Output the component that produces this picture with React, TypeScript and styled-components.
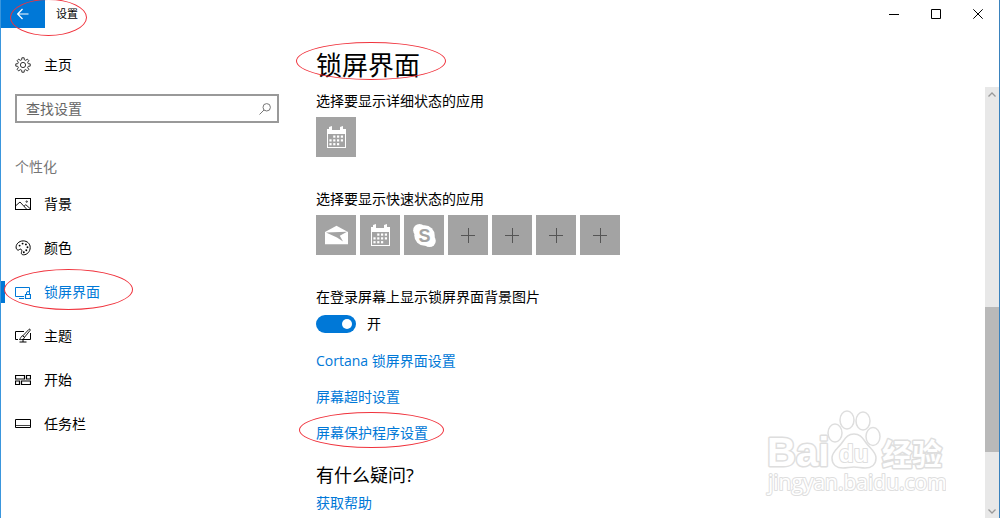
import React from "react";
import styled, { createGlobalStyle } from "styled-components";

const BLUE = "#0078d7";

const GlobalStyle = createGlobalStyle`
  * { box-sizing: border-box; }
  body { margin: 0; background: #fff; }
  body, button, input {
    font-family: "Open Sans", "Noto Sans CJK SC", sans-serif;
    font-size: 14px;
    color: #000;
  }
`;

const Window = styled.div`
  position: relative;
  display: flex;
  flex-direction: column;
  height: 100vh;
  overflow: hidden;
  border-left: 1px solid #3a96dd;
  border-right: 1px solid #3a82bd;
  line-height: 20px;
`;

const TitleBar = styled.header`
  position: relative;
  display: flex;
  height: 28px;
  flex: none;
`;

const BackButton = styled.button`
  display: flex;
  align-items: center;
  justify-content: center;
  width: 44px;
  padding: 0;
  border: 0;
  background: ${BLUE};
`;

const WindowTitle = styled.span`
  flex: 1;
  padding-left: 11px;
  font-size: 11px;
  line-height: 28px;
`;

const CaptionButton = styled.button`
  display: flex;
  align-items: center;
  justify-content: center;
  width: 42px;
  padding: 0;
  border: 0;
  background: none;
`;

const Body = styled.div`
  display: flex;
  flex: 1;
  min-height: 0;
`;

const Sidebar = styled.nav`
  display: flex;
  flex-direction: column;
  flex: none;
  width: 300px;
  padding: 15px 22px 0 14px;
`;

const NavItem = styled.a<{ $active?: boolean }>`
  position: relative;
  display: flex;
  align-items: center;
  gap: 13px;
  height: 44px;
  color: ${(p) => (p.$active ? BLUE : "#000")};
  text-decoration: none;

  &::before {
    content: "";
    display: ${(p) => (p.$active ? "block" : "none")};
    position: absolute;
    left: -14px;
    top: 11px;
    width: 4px;
    height: 22px;
    background: ${BLUE};
  }
`;

const SearchBox = styled.label`
  display: flex;
  align-items: center;
  height: 29px;
  margin-top: 7px;
  padding: 0 6px 0 9px;
  border: 2px solid #999;
`;

const SearchInput = styled.input`
  flex: 1;
  min-width: 0;
  padding: 0;
  border: 0;
  outline: 0;
  background: none;
  &::placeholder { color: #666; opacity: 1; }
`;

const GroupLabel = styled.h2`
  margin: 34px 0 5px;
  font-size: 14px;
  font-weight: 400;
  line-height: 20px;
  color: #767676;
`;

const Main = styled.main`
  display: flex;
  flex-direction: column;
  align-items: flex-start;
  flex: 1;
  min-width: 0;
  padding: 19px 14px 0 15px;
`;

const PageTitle = styled.h1`
  position: relative;
  margin: 0 0 8px;
  font-size: 26px;
  font-weight: 400;
  line-height: 36px;
`;

const Field = styled.section`
  margin-bottom: 32px;
`;

const FieldLabel = styled.div`
  margin-bottom: 6px;
`;

const Tiles = styled.div`
  display: flex;
  gap: 4px;
`;

const Tile = styled.button`
  width: 40px;
  height: 40px;
  padding: 0;
  border: 0;
  background: #a3a3a3;
  svg { display: block; }
`;

const ToggleRow = styled.label`
  display: flex;
  align-items: center;
  gap: 11px;
  margin: 7px 0 17px;
`;

const Toggle = styled.input`
  appearance: none;
  display: flex;
  align-items: center;
  width: 40px;
  height: 18px;
  margin: 0;
  padding: 0 4px;
  border-radius: 9px;
  background: #999;

  &::before {
    content: "";
    width: 10px;
    height: 10px;
    border-radius: 50%;
    background: #fff;
  }
  &:checked { justify-content: flex-end; background: ${BLUE}; }
`;

const TextLink = styled.a`
  position: relative;
  margin-bottom: 16px;
  color: ${BLUE};
  text-decoration: none;
`;

const HelpTitle = styled.h2`
  margin: 2px 0 4px;
  font-size: 18px;
  font-weight: 400;
  line-height: 28px;
`;

const Scrollbar = styled.div`
  display: flex;
  flex-direction: column;
  flex: none;
  width: 14px;
  margin-top: 59px;
  background: #e8e8e8;
`;

const ScrollArrow = styled.button`
  display: flex;
  align-items: center;
  justify-content: center;
  height: 14px;
  padding: 0;
  border: 0;
  background: none;
`;

const ScrollTrack = styled.div`
  display: flex;
  flex-direction: column;
  flex: 1;
`;

const ScrollThumb = styled.div`
  height: 36%;
  margin-top: auto;
  background: #b9b9b9;
`;

const ScrollRest = styled.div`
  height: 13%;
`;

const Ring = styled.span<{ $x: number; $y: number; $w: number; $h: number }>`
  position: absolute;
  z-index: 2;
  left: ${(p) => p.$x}px;
  top: ${(p) => p.$y}px;
  width: ${(p) => p.$w}px;
  height: ${(p) => p.$h}px;
  border: 1px solid #f0323c;
  border-radius: 50%;
  pointer-events: none;
`;

const Watermark = styled.svg`
  position: absolute;
  right: 53px;
  bottom: 18px;
  pointer-events: none;
`;

const LineIcon = styled.svg`
  display: block;
  flex: none;
  fill: none;
  stroke: currentColor;
`;

const Icon = ({ children }: { children: React.ReactNode }) => (
  <LineIcon width="16" height="16" viewBox="0 0 16 16" aria-hidden="true">
    {children}
  </LineIcon>
);

const gearPoints = Array.from({ length: 8 }, (_, i) => {
  const at = (r: number, deg: number) => {
    const a = ((i * 45 + deg) * Math.PI) / 180;
    return `${(8 + r * Math.cos(a)).toFixed(2)},${(8 + r * Math.sin(a)).toFixed(2)}`;
  };
  return [at(5.4, -14), at(7.3, -9), at(7.3, 9), at(5.4, 14)].join(" ");
}).join(" ");

const GearIcon = () => (
  <Icon>
    <g stroke="#333">
      <polygon points={gearPoints} strokeLinejoin="round" />
      <circle cx="8" cy="8" r="2.6" />
    </g>
  </Icon>
);

const PictureIcon = () => (
  <Icon>
    <rect x="0.5" y="2.5" width="15" height="11" />
    <path d="M1 9.5 5 6l6.5 7M9 10.3l1.800-1.600L15 12.5" strokeWidth="0.9" />
    <circle cx="11.7" cy="5.6" r="0.7" strokeWidth="0.8" />
  </Icon>
);

const PaletteIcon = () => (
  <Icon>
    <path d="M1.2 8.2C.4 4.500 3.800.9 8.200.9c4 0 7 2.800 7 6.600 0 4.200-3.200 7.300-6.600 7.300-1.700 0-2.500-.9-2.200-2.200.4-1.500.8-2.300-.2-3.200-1.400-1.200-2 1.300-3.500.6-.8-.4-1.300-1-1.500-1.800Z" />
    <g fill="currentColor" stroke="none">
      <circle cx="4.6" cy="5.6" r="0.95" />
      <circle cx="7.6" cy="3.6" r="0.95" />
      <circle cx="10.9" cy="4.4" r="0.95" />
      <circle cx="12.5" cy="7.3" r="0.95" />
      <circle cx="11.3" cy="10.3" r="0.95" />
      <circle cx="8.8" cy="12.3" r="0.95" />
    </g>
  </Icon>
);

const LockScreenIcon = () => (
  <Icon>
    <path d="M9 12.5H.5v-9h14V8M4 14.5h5" />
    <path d="M10.5 10.5h5v4h-5z" strokeWidth="1.2" />
    <path d="M11.5 10.5V9a1.500 1.500 0 0 1 3 0v1.500" />
  </Icon>
);

const ThemeIcon = () => (
  <Icon>
    <path d="M9 3.5H.5v8H3M15.5 5v6.500H7M4.500 14h7M8 12v2" />
    <path d="M14 1.300c.9-.5 1.600.3 1.100 1.100L9.500 9.300 7.800 7.800ZM7.800 7.800l1.700 1.500c-.3 2-2.700 2.700-5.200 2.200 1.500-.6 1.400-3.600 3.500-3.700Z" strokeWidth="0.9" />
  </Icon>
);

const StartIcon = () => (
  <Icon>
    <path d="M.5 3.500h9v3.500h-9zM11.500 3.500h4v3.500h-4zM.5 9h4v3.500h-4zM6.500 9h9v3.500h-9z" strokeWidth="1.200" />
  </Icon>
);

const TaskbarIcon = () => (
  <Icon>
    <path d="M.5 3.500h15v8H.5z" />
    <path d="M1 9.500h14" stroke="#444" />
  </Icon>
);

const CalendarTileIcon = () => (
  <svg width="40" height="40" viewBox="0 0 40 40" aria-hidden="true">
    <path fill="#fff" d="M11 12h2V10l3-1v4h8v-3l3-1v3h3v19H11Z" />
    <path fill="#a3a3a3" d="M12 17h17v13H12Z" />
    <g fill="#fff">
      {[0, 1, 2].map((row) =>
        [0, 1, 2, 3].map((col) =>
          (row === 0 && col === 0) || (row === 2 && col === 3) ? null : (
            <rect key={`${row}-${col}`} x={13.4 + col * 3.8} y={18.5 + row * 3.8} width="2.2" height="2.2" />
          ),
        ),
      )}
    </g>
  </svg>
);

const MailTileIcon = () => (
  <svg width="40" height="40" viewBox="0 0 40 40" aria-hidden="true">
    <path fill="#fff" d="M9 17 20.500 10.800 32 17v12.300H9Z" />
    <path fill="#a3a3a3" d="m10 17.500 21-.7-7.200 4 3.200 5.700-6-4Z" />
  </svg>
);

const SkypeTileIcon = () => (
  <svg width="40" height="40" viewBox="0 0 40 40" aria-hidden="true">
    <g fill="#fff">
      <circle cx="20.5" cy="20.5" r="10.2" />
      <circle cx="15.5" cy="15.3" r="6.3" />
      <circle cx="25.5" cy="25.7" r="6.3" />
    </g>
    <text x="20.5" y="27" textAnchor="middle" fontFamily="Liberation Sans, sans-serif" fontSize="18" fontWeight="700" fill="#a3a3a3">S</text>
  </svg>
);

const PlusTileIcon = () => (
  <svg width="40" height="40" viewBox="0 0 40 40" aria-hidden="true">
    <path d="M13 20.500h14M20.500 13v15" stroke="#555" fill="none" />
  </svg>
);

const navItems = [
  { label: "背景", icon: <PictureIcon /> },
  { label: "颜色", icon: <PaletteIcon /> },
  { label: "锁屏界面", icon: <LockScreenIcon />, active: true },
  { label: "主题", icon: <ThemeIcon /> },
  { label: "开始", icon: <StartIcon /> },
  { label: "任务栏", icon: <TaskbarIcon /> },
];

export default function App() {
  return (
    <>
      <GlobalStyle />
      <Window>
        <TitleBar>
          <BackButton aria-label="返回">
            <LineIcon width="12" height="12" viewBox="0 0 12 12" aria-hidden="true">
              <path d="M.5 6h11M5.500 1 .700 6l4.800 5" stroke="#fff" strokeWidth="1.200" />
            </LineIcon>
          </BackButton>
          <WindowTitle>设置</WindowTitle>
          <CaptionButton aria-label="最小化">
            <LineIcon width="10" height="10" viewBox="0 0 10 10"><path d="M0 5.500h10" /></LineIcon>
          </CaptionButton>
          <CaptionButton aria-label="最大化">
            <LineIcon width="10" height="10" viewBox="0 0 10 10"><path d="M.5.5h9v9h-9z" /></LineIcon>
          </CaptionButton>
          <CaptionButton aria-label="关闭">
            <LineIcon width="10" height="10" viewBox="0 0 10 10"><path d="m.3.300 9.400 9.400M9.700.300.300 9.700" /></LineIcon>
          </CaptionButton>
          <Ring $x={9} $y={-1} $w={77} $h={37} />
        </TitleBar>

        <Body>
          <Sidebar>
            <NavItem href="#home"><GearIcon />主页</NavItem>
            <SearchBox>
              <SearchInput type="text" placeholder="查找设置" aria-label="查找设置" />
              <LineIcon width="12" height="12" viewBox="0 0 12 12" aria-hidden="true">
                <g stroke="#777"><circle cx="7.7" cy="4.3" r="3.7" /><path d="M5 7 .5 11.500" /></g>
              </LineIcon>
            </SearchBox>
            <GroupLabel>个性化</GroupLabel>
            {navItems.map((item) => (
              <NavItem key={item.label} href={`#${item.label}`} $active={item.active}>
                {item.icon}
                {item.label}
                {item.active && <Ring $x={-11} $y={-1} $w={129} $h={41} />}
              </NavItem>
            ))}
          </Sidebar>

          <Main>
            <PageTitle>
              锁屏界面
              <Ring $x={-20} $y={-5} $w={150} $h={38} />
            </PageTitle>
            <Field>
              <FieldLabel>选择要显示详细状态的应用</FieldLabel>
              <Tiles>
                <Tile aria-label="日历"><CalendarTileIcon /></Tile>
              </Tiles>
            </Field>
            <Field>
              <FieldLabel>选择要显示快速状态的应用</FieldLabel>
              <Tiles>
                <Tile aria-label="邮件"><MailTileIcon /></Tile>
                <Tile aria-label="日历"><CalendarTileIcon /></Tile>
                <Tile aria-label="Skype"><SkypeTileIcon /></Tile>
                {[1, 2, 3, 4].map((n) => (
                  <Tile key={n} aria-label="添加应用"><PlusTileIcon /></Tile>
                ))}
              </Tiles>
            </Field>
            <div id="background-label">在登录屏幕上显示锁屏界面背景图片</div>
            <ToggleRow>
              <Toggle type="checkbox" defaultChecked aria-labelledby="background-label" />
              开
            </ToggleRow>
            <TextLink href="#cortana">Cortana 锁屏界面设置</TextLink>
            <TextLink href="#timeout">屏幕超时设置</TextLink>
            <TextLink href="#screensaver">
              屏幕保护程序设置
              <Ring $x={-17} $y={-11} $w={145} $h={36} />
            </TextLink>
            <HelpTitle>有什么疑问?</HelpTitle>
            <TextLink href="#help">获取帮助</TextLink>
          </Main>

          <Scrollbar>
            <ScrollArrow aria-label="向上滚动">
              <LineIcon width="8" height="5" viewBox="0 0 8 5"><path d="m.5 4.500 3.500-3.500 3.500 3.500" stroke="#999" strokeWidth="1.300" /></LineIcon>
            </ScrollArrow>
            <ScrollTrack>
              <ScrollThumb />
              <ScrollRest />
            </ScrollTrack>
            <ScrollArrow aria-label="向下滚动">
              <LineIcon width="8" height="5" viewBox="0 0 8 5"><path d="m.5.500 3.500 3.500 3.500-3.500" stroke="#999" strokeWidth="1.300" /></LineIcon>
            </ScrollArrow>
          </Scrollbar>
        </Body>

        <Watermark width="188" height="92" viewBox="0 0 188 92" aria-hidden="true">
          <g fill="#fff" stroke="#dedede" strokeWidth="1.500" strokeLinejoin="round">
            <ellipse cx="77" cy="25" rx="7" ry="9" />
            <ellipse cx="89" cy="12" rx="7" ry="9" />
            <ellipse cx="105" cy="13" rx="7" ry="9" />
            <ellipse cx="115" cy="28.5" rx="7" ry="9" />
            <path d="M96 26c7 0 9 5 13 10 4 5 9 8 9 14 0 7-5 10-11 10-4 0-7-1-11-1s-7 1-11 1c-6 0-11-3-11-10 0-6 5-9 9-14 4-5 6-10 13-10Z" />
          </g>
          <g fill="#fff" stroke="#dedede" strokeWidth="3" paintOrder="stroke" strokeLinejoin="round" fontWeight="700">
            <text x="9" y="58" fontFamily="Liberation Sans, sans-serif" fontSize="40">Bai</text>
            <text x="81" y="54" fontFamily="Liberation Sans, sans-serif" fontSize="24" strokeWidth="2">du</text>
            <text x="124" y="57" fontFamily="Noto Sans CJK SC, sans-serif" fontSize="30">经验</text>
            <text x="10" y="82" fontFamily="Open Sans, sans-serif" fontSize="21" fontWeight="400" strokeWidth="2">jingyan.baidu.com</text>
          </g>
        </Watermark>
      </Window>
    </>
  );
}
